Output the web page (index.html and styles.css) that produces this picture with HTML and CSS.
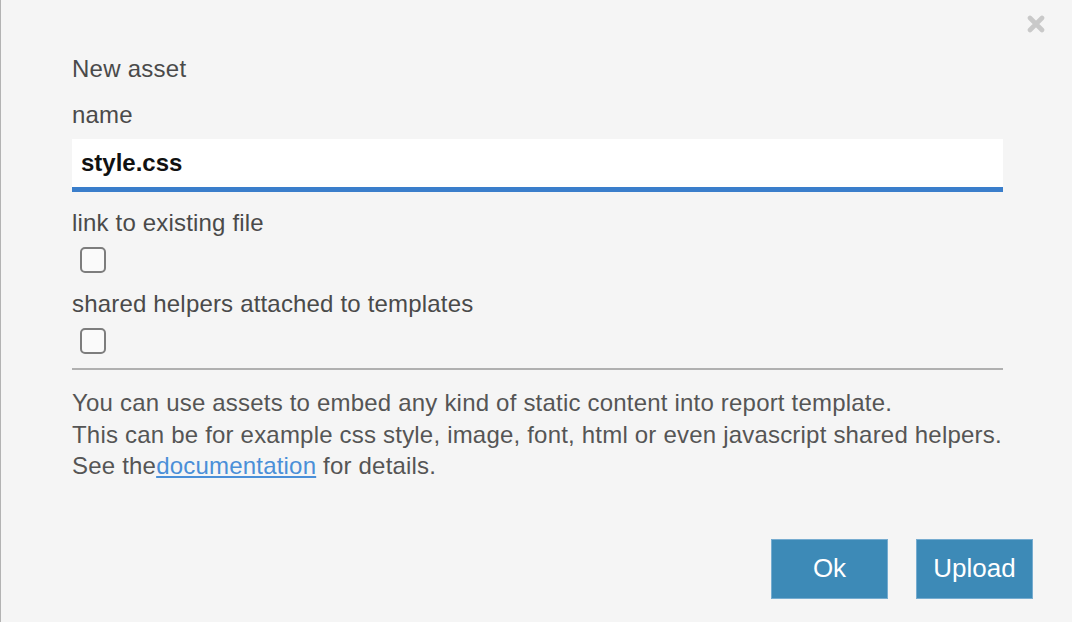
FILE: index.html
```html
<!DOCTYPE html>
<html>
<head>
<meta charset="utf-8">
<link rel="stylesheet" href="styles.css">
</head>
<body>
<div class="dialog">
  <button class="close" aria-label="close">
    <svg width="18" height="18" viewBox="0 0 18 18"><path d="M3 3L15 15M15 3L3 15" stroke="#c9c9c9" stroke-width="4.6" stroke-linecap="round"/></svg>
  </button>
  <div class="title">New asset</div>
  <label class="label label-name">name</label>
  <div class="input">style.css</div>
  <label class="label label-gap">link to existing file</label>
  <span class="check"></span>
  <label class="label label-gap">shared helpers attached to templates</label>
  <span class="check"></span>
  <hr class="rule">
  <p class="help">You can use assets to embed any kind of static content into report template.<br>This can be for example css style, image, font, html or even javascript shared helpers.<br>See the<a href="#">documentation</a> for details.</p>
  <div class="actions">
    <button class="btn">Ok</button>
    <button class="btn">Upload</button>
  </div>
</div>
</body>
</html>
```
FILE: styles.css
```css
html, body {
  margin: 0;
  padding: 0;
  background: #f5f5f5;
}
.dialog {
  position: relative;
  box-sizing: border-box;
  width: 1072px;
  height: 622px;
  border-left: 1px solid #b3b3b3;
  background: #f5f5f5;
  padding: 55px 69px 0 71px;
  display: flex;
  flex-direction: column;
  font-family: "Liberation Sans", Arial, sans-serif;
  font-size: 24px;
  color: #4a4a4a;
}
.close {
  position: absolute;
  top: 15px;
  right: 27px;
  width: 18px;
  height: 18px;
  padding: 0;
  border: 0;
  background: none;
}
.close svg { display: block; }
.title {
  line-height: 28px;
  letter-spacing: 0.25px;
}
.label {
  display: block;
  line-height: 28px;
  letter-spacing: 0.18px;
}
.label-name { margin-top: 18px; }
.label-gap { margin-top: 17px; }
.input {
  margin-top: 10px;
  box-sizing: border-box;
  height: 53px;
  background: #fff;
  border-bottom: 5px solid #3a7ecb;
  padding: 0 9px;
  line-height: 48px;
  font-weight: 700;
  color: #111;
}
.check {
  display: block;
  margin: 10px 0 0 8px;
  width: 26px;
  height: 26px;
  box-sizing: border-box;
  border: 2px solid #7d7d7d;
  border-radius: 5px;
  background: #fafafa;
}
.rule {
  margin: 14px 0 0;
  border: 0;
  height: 2px;
  background: #b0b0b0;
}
.help {
  margin: 17px 0 0;
  line-height: 31.5px;
  color: #555;
  letter-spacing: 0.2px;
}
.help a {
  color: #4a8fd8;
  text-decoration: underline;
}
.actions {
  margin-top: 57px;
  margin-right: -30px;
  display: flex;
  justify-content: flex-end;
  gap: 28px;
}
.btn {
  width: 117px;
  height: 60px;
  box-sizing: border-box;
  border: 1px solid #76acd0;
  background: #3d8ab7;
  color: #fff;
  font-family: "Liberation Sans", Arial, sans-serif;
  font-size: 26px;
  padding: 0;
}
```
